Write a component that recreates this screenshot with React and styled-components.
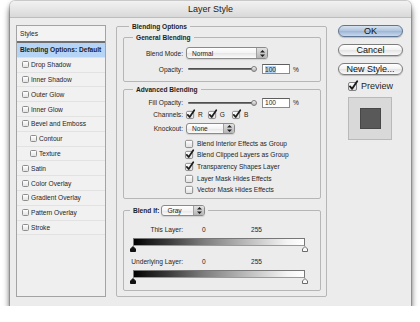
import React from "react";
import styled, { createGlobalStyle } from "styled-components";

const GlobalStyle = createGlobalStyle`
  html, body {
    margin: 0;
    padding: 0;
    background: #ffffff;
  }
  body {
    font-family: "Liberation Sans", Arial, sans-serif;
    color: #1e1e1e;
  }
  * {
    box-sizing: border-box;
  }
`;

const Window = styled.div`
  margin: 1px 0 0 10px;
  width: 401px;
  height: 305px;
  background: #ececec;
  border-radius: 5px 5px 0 0;
  box-shadow: 0 0 0 1px rgba(0, 0, 0, 0.14), 0 6px 7px rgba(0, 0, 0, 0.6),
    0 1px 4px rgba(0, 0, 0, 0.25);
  display: flex;
  flex-direction: column;
`;

const TitleBar = styled.div`
  height: 17px;
  display: flex;
  align-items: center;
  justify-content: center;
  font-size: 9px;
  color: #222;
  background: linear-gradient(#f2f2f2, #d9d9d9);
  border-radius: 5px 5px 0 0;
  border-bottom: 1px solid #bdbdbd;
`;

const Body = styled.div`
  display: flex;
  align-items: flex-start;
  padding: 4px 8px 0 6px;
`;

/* ---- styles list ---- */

const StylesPanel = styled.div`
  width: 90px;
  height: 272px;
  margin-top: 3px;
  border: 1px solid #a3a3a3;
  background: #efefef;
  font-size: 6.6px;
`;

const StylesHeader = styled.div`
  height: 17px;
  display: flex;
  align-items: center;
  padding-left: 3px;
  background: #f3f3f3;
  border-bottom: 2px solid #707070;
`;

const StyleRow = styled.div`
  height: 14.8px;
  display: flex;
  align-items: center;
  gap: 2px;
  padding-left: ${({ $nested }) => ($nested ? 13 : 5)}px;
  border-bottom: 1px solid #e2e2e2;
  background: ${({ $selected }) => ($selected ? "#b6d4f6" : "#f1f1f1")};
  font-weight: ${({ $selected }) => ($selected ? "bold" : "normal")};
  ${({ $selected }) => $selected && "padding-left: 3px;"}
`;

const ListBox = styled.span`
  width: 7px;
  height: 7px;
  border: 1px solid #8d8d8d;
  border-radius: 1.5px;
  background: linear-gradient(#ffffff, #e3e3e3);
`;

/* ---- center group ---- */

const Group = styled.fieldset`
  margin: ${({ $mt }) => $mt || 0}px 0 0 ${({ $ml }) => $ml || 0}px;
  padding: ${({ $pad }) => $pad};
  border: 1px solid #b6b6b6;
  border-radius: 2px;
  min-width: 0;
  width: ${({ $w }) => ($w ? `${$w}px` : "auto")};
`;

const Legend = styled.legend`
  margin-left: ${({ $indent }) => $indent}px;
  padding: 0 3px;
  height: ${({ $h }) => $h || 8}px;
  display: flex;
  align-items: center;
  gap: 2px;
  font-size: 6.6px;
  font-weight: bold;
`;

const Row = styled.div`
  display: flex;
  align-items: center;
  height: ${({ $h }) => $h}px;
  margin-top: ${({ $mt }) => $mt || 0}px;
  padding-left: ${({ $indent }) => $indent || 0}px;
  font-size: 6.6px;
`;

const Label = styled.span`
  width: 59px;
  text-align: right;
  margin-right: ${({ $mr }) => ($mr == null ? 3 : $mr)}px;
  white-space: nowrap;
`;

const SelectBox = styled.div`
  width: ${({ $w }) => $w}px;
  height: ${({ $h }) => $h}px;
  display: flex;
  align-items: center;
  border: 1px solid #8a8a8a;
  border-radius: 3px;
  background: linear-gradient(#ffffff, #f3f3f3 50%, #e7e7e7 55%, #fbfbfb);
  box-shadow: 0 1px 1px rgba(0, 0, 0, 0.12);
  font-size: 6.6px;
  font-weight: normal;
  overflow: hidden;
`;

const SelectText = styled.span`
  flex: 1;
  padding-left: 5px;
`;

const SelectArrows = styled.span`
  width: 11px;
  height: 100%;
  display: flex;
  align-items: center;
  justify-content: center;
  border-left: 1px solid #a0a0a0;
  background: linear-gradient(#e2e2e2, #b5b5b5);
`;

const Slider = styled.div`
  position: relative;
  width: 70px;
  height: 8px;
  margin-left: 2px;
  display: flex;
  align-items: center;
`;

const Track = styled.div`
  width: 65px;
  height: 2px;
  border-radius: 1px;
  background: linear-gradient(#3c3c3c, #8a8a8a);
`;

const Thumb = styled.div`
  position: absolute;
  right: 1px;
  top: 1px;
  width: 6px;
  height: 6px;
  border-radius: 50%;
  border: 1px solid #7a7a7a;
  background: linear-gradient(#f4f4f4, #b0b0b0);
`;

const NumberField = styled.div`
  width: 28px;
  height: 10px;
  margin-left: 4px;
  display: flex;
  align-items: center;
  padding-left: 2px;
  border: 1px solid #8a8a8a;
  border-top-color: #5e5e5e;
  background: #fff;
`;

const Selected = styled.span`
  background: ${({ $on }) => ($on ? "#b4d4fa" : "transparent")};
  line-height: 7px;
`;

const Percent = styled.span`
  margin-left: 3px;
`;

const Channel = styled.span`
  display: flex;
  align-items: center;
  gap: 3px;
  margin-right: ${({ $mr }) => $mr}px;
`;

const CheckText = styled.span`
  margin-left: 3px;
`;

const Value = styled.span`
  width: ${({ $w }) => $w}px;
  margin-left: ${({ $ml }) => $ml || 0}px;
`;

const GradientBar = styled.div`
  height: 8px;
  margin: ${({ $mt }) => $mt}px 15px 0 9px;
  border: 1px solid #777;
  border-bottom-color: #9a9a9a;
  background: linear-gradient(
    to right,
    #000 0%,
    #1a1a1a 8%,
    #3a3a3a 20%,
    #7a7a7a 40%,
    #b8b8b8 65%,
    #f4f4f4 90%,
    #ffffff 100%
  );
`;

const Markers = styled.div`
  height: 6px;
  display: flex;
  justify-content: space-between;
  padding: 0 12px 0 6px;
`;

/* ---- right column ---- */

const Side = styled.div`
  width: 65px;
  margin: 3px 0 0 11px;
  display: flex;
  flex-direction: column;
`;

const PillButton = styled.div`
  height: 12px;
  margin-bottom: 7px;
  display: flex;
  align-items: center;
  justify-content: center;
  border-radius: 7px;
  font-size: 9px;
  color: #111;
  border: 1px solid ${({ $primary }) => ($primary ? "#5f7594" : "#7c7c7c")};
  background: ${({ $primary }) =>
    $primary
      ? "linear-gradient(#d6e2f0, #aec3dd 50%, #9db6d6 52%, #c9d9ec)"
      : "linear-gradient(#ffffff, #f2f2f2 50%, #e4e4e4 52%, #fafafa)"};
  box-shadow: 0 1px 1px rgba(0, 0, 0, 0.2);
`;

const PreviewRow = styled.div`
  display: flex;
  align-items: center;
  gap: 3px;
  margin: -1px 0 0 10px;
  height: 10px;
  font-size: 9px;
`;

const Swatch = styled.div`
  width: 44px;
  height: 43px;
  margin: 6px 0 0 10px;
  display: flex;
  align-items: center;
  justify-content: center;
  background: #d9d9d9;
  border: 1px solid #b9b9b9;
`;

const SwatchInner = styled.div`
  width: 21px;
  height: 21px;
  background: #595959;
  border: 1px solid #474747;
`;

/* ---- drawings ---- */

const CheckBox = ({ checked, size = 9 }) => (
  <svg width={size} height={size} viewBox="0 0 10 10" style={{ flex: "none", overflow: "visible" }}>
    <defs>
      <linearGradient id="cbg" x1="0" y1="0" x2="0" y2="1">
        <stop offset="0" stopColor="#ffffff" />
        <stop offset="1" stopColor="#dedede" />
      </linearGradient>
    </defs>
    <rect x="0.5" y="1.5" width="8" height="8" rx="1.5" fill="url(#cbg)" stroke="#828282" />
    {checked && (
      <path
        d="M2 5.4 L4.1 7.8 L9.2 0.2"
        fill="none"
        stroke="#1c1c1c"
        strokeWidth="1.9"
        strokeLinecap="round"
        strokeLinejoin="round"
      />
    )}
  </svg>
);

const UpDown = () => (
  <svg width="5" height="7" viewBox="0 0 5 7">
    <path d="M2.5 0 L5 2.6 H0 Z M2.5 7 L5 4.4 H0 Z" fill="#1e1e1e" />
  </svg>
);

const Marker = ({ dark }) => (
  <svg width="6" height="6" viewBox="0 0 6 6">
    <path
      d="M3 0.5 L5.5 3 V5.5 H0.5 V3 Z"
      fill={dark ? "#111" : "#fafafa"}
      stroke={dark ? "#111" : "#6a6a6a"}
      strokeWidth="1"
    />
  </svg>
);

const Select = ({ value, w, h }) => (
  <SelectBox $w={w} $h={h}>
    <SelectText>{value}</SelectText>
    <SelectArrows>
      <UpDown />
    </SelectArrows>
  </SelectBox>
);

const styleItems = [
  { label: "Drop Shadow" },
  { label: "Inner Shadow" },
  { label: "Outer Glow" },
  { label: "Inner Glow" },
  { label: "Bevel and Emboss" },
  { label: "Contour", nested: true },
  { label: "Texture", nested: true },
  { label: "Satin" },
  { label: "Color Overlay" },
  { label: "Gradient Overlay" },
  { label: "Pattern Overlay" },
  { label: "Stroke" },
];

const advancedChecks = [
  { label: "Blend Interior Effects as Group", checked: false },
  { label: "Blend Clipped Layers as Group", checked: true },
  { label: "Transparency Shapes Layer", checked: true },
  { label: "Layer Mask Hides Effects", checked: false },
  { label: "Vector Mask Hides Effects", checked: false },
];

const OpacityRow = ({ label, selected, h, mt }) => (
  <Row $h={h} $mt={mt}>
    <Label $mr={3}>{label}</Label>
    <Slider>
      <Track />
      <Thumb />
    </Slider>
    <NumberField>
      <Selected $on={selected}>100</Selected>
    </NumberField>
    <Percent>%</Percent>
  </Row>
);

const BlendIfLayer = ({ label, mt, barMt }) => (
  <>
    <Row $h={10} $mt={mt}>
      <Label $mr={19}>{label}</Label>
      <Value $w={49}>0</Value>
      <Value>255</Value>
    </Row>
    <GradientBar $mt={barMt} />
    <Markers>
      <Marker dark />
      <Marker />
    </Markers>
  </>
);

export default function App() {
  return (
    <>
      <GlobalStyle />
      <Window>
        <TitleBar>Layer Style</TitleBar>
        <Body>
          <StylesPanel>
            <StylesHeader>Styles</StylesHeader>
            <StyleRow $selected>Blending Options: Default</StyleRow>
            {styleItems.map((item) => (
              <StyleRow key={item.label} $nested={item.nested}>
                <ListBox />
                {item.label}
              </StyleRow>
            ))}
          </StylesPanel>

          <Group $w={211} $ml={10} $pad="3px 5px 5px 6px">
            <Legend $indent={6}>Blending Options</Legend>

            <Group $pad="5px 0 5px 0">
              <Legend $indent={9}>General Blending</Legend>
              <Row $h={14}>
                <Label>Blend Mode:</Label>
                <Select value="Normal" w={82} h={12} />
              </Row>
              <OpacityRow label="Opacity:" selected h={14} mt={2} />
            </Group>

            <Group $mt={3} $pad="4px 0 2px 0">
              <Legend $indent={9}>Advanced Blending</Legend>
              <OpacityRow label="Fill Opacity:" h={11.7} />
              <Row $h={11.7}>
                <Label>Channels:</Label>
                <Channel $mr={5}>
                  <CheckBox checked />
                  R
                </Channel>
                <Channel $mr={7}>
                  <CheckBox checked />
                  G
                </Channel>
                <Channel $mr={0}>
                  <CheckBox checked />
                  B
                </Channel>
              </Row>
              <Row $h={11.7} $mt={2.3}>
                <Label>Knockout:</Label>
                <Select value="None" w={49} h={11} />
              </Row>
              {advancedChecks.map((c, i) => (
                <Row key={c.label} $h={11.7} $mt={i === 0 ? 3 : 0} $indent={61}>
                  <CheckBox checked={c.checked} />
                  <CheckText>{c.label}</CheckText>
                </Row>
              ))}
            </Group>

            <Group $mt={6} $pad="9px 0 6px 0">
              <Legend $indent={6} $h={11}>
                Blend If:
                <Select value="Gray" w={44} h={11} />
              </Legend>
              <BlendIfLayer label="This Layer:" mt={0} barMt={3} />
              <BlendIfLayer label="Underlying Layer:" mt={5} barMt={3} />
            </Group>
          </Group>

          <Side>
            <PillButton $primary>OK</PillButton>
            <PillButton>Cancel</PillButton>
            <PillButton>New Style...</PillButton>
            <PreviewRow>
              <CheckBox checked size={10} />
              Preview
            </PreviewRow>
            <Swatch>
              <SwatchInner />
            </Swatch>
          </Side>
        </Body>
      </Window>
    </>
  );
}
